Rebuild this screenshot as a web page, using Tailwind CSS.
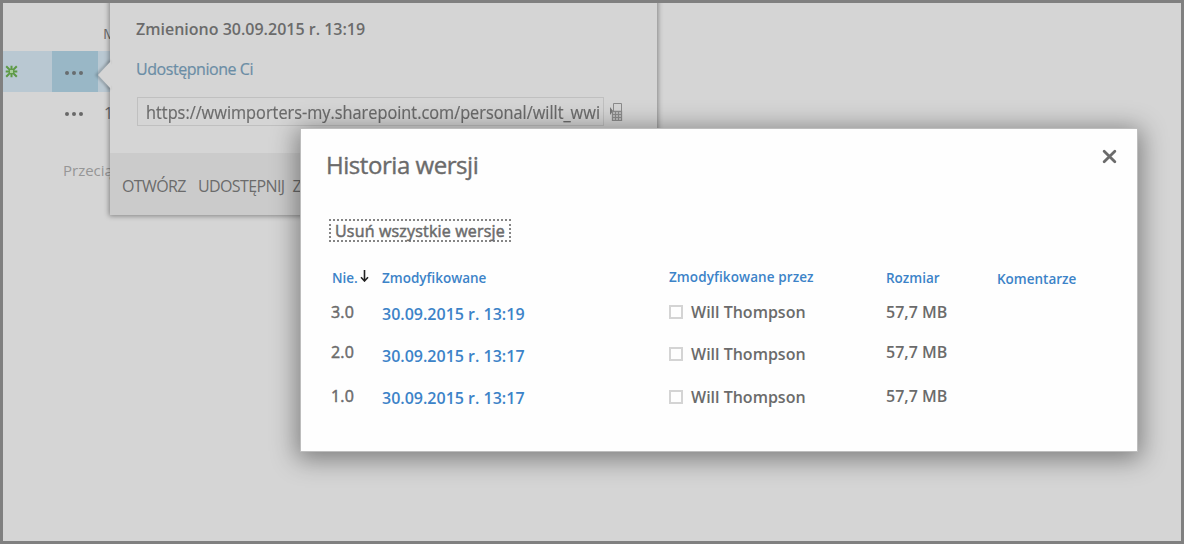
<!DOCTYPE html>
<html lang="pl">
<head>
<meta charset="utf-8">
<title>Historia wersji</title>
<script src="https://cdn.jsdelivr.net/npm/@tailwindcss/browser@4"></script>
</head>
<body class="font-['Open_Sans','Noto_Sans',sans-serif]">
<div class="relative flex h-[544px] w-[1184px] overflow-hidden border-3 border-[#808080] bg-[#d5d5d5] text-[#6b6b6b]">

  <!-- Document list behind the callout -->
  <main class="flex w-[130px] flex-col pt-5">
    <div class="h-7 pl-[100px] text-[15px] leading-5">Mo</div>
    <div class="flex h-[41px] items-center bg-[#b9c8d2]">
      <svg class="ml-[1.5px] h-[13px] w-[13px]" viewBox="0 0 13 13" fill="none" stroke="#5d9a45" stroke-width="2"><rect x="4.3" y="4.3" width="4.4" height="4.4" stroke-width="1.3" fill="#a9cf9b"/><path d="M6.5 0.7V4M6.5 9v3.3M0.7 6.5H4M9 6.5h3.3M1.2 1.2l3 3M11.8 1.2l-3 3M1.2 11.8l3-3M11.8 11.8l-3-3"/></svg>
      <div class="ml-[34px] flex h-full w-[46px] items-center gap-[3px] bg-[#99b7c6] pt-0.5 pl-[13px]">
        <i class="size-1 rounded-full bg-[#686d70]"></i><i class="size-1 rounded-full bg-[#686d70]"></i><i class="size-1 rounded-full bg-[#686d70]"></i>
      </div>
    </div>
    <div class="flex h-[41px] items-center pl-[62px]">
      <div class="flex gap-[3px] pt-0.5"><i class="size-1 rounded-full bg-[#686868]"></i><i class="size-1 rounded-full bg-[#686868]"></i><i class="size-1 rounded-full bg-[#686868]"></i></div>
      <span class="ml-[21px] text-base">1</span>
    </div>
    <div class="mt-[25px] pl-[60px] text-[15px] leading-6 whitespace-nowrap text-[#969696]">Przeciągnij</div>
  </main>

  <!-- File callout -->
  <section class="absolute -top-2 left-[107px] flex h-[220px] w-[547px] flex-col bg-[#d5d5d5] pt-2 shadow-[0_0_5px_1px_rgba(0,0,0,0.38)]">
    <svg class="absolute top-[66px] -left-[13px] h-[28px] w-[14px] overflow-visible" viewBox="0 0 14 28"><path d="M13 0L0 14L13 28" fill="none" stroke="#00000030" stroke-width="3" class="blur-[1px]"/><path d="M14 0L1 14L14 28Z" fill="#d5d5d5"/></svg>
    <h2 class="mt-[14px] ml-[26px] text-base leading-6 font-semibold whitespace-nowrap">Zmieniono 30.09.2015 r. 13:19</h2>
    <a class="mt-4 ml-[26px] text-base leading-6 tracking-[-0.45px] whitespace-nowrap text-[#6b8da5] [-webkit-text-stroke:0.2px]">Udostępnione Ci</a>
    <div class="mt-4 ml-[27px] flex items-center">
      <div class="flex h-[29px] w-[467px] items-center border border-[#c0c0c0] pt-px pl-2 text-[18px] whitespace-nowrap"><span class="w-[454px] origin-left scale-x-[0.906] [-webkit-text-stroke:0.2px]">https://wwimporters-my.sharepoint.com/personal/willt_wwi</span></div>
      <svg class="ml-[5px] h-[18px] w-[14px]" viewBox="0 0 14 18" fill="none" stroke="#8b8b8b"><path d="M1 4v8l3-4z" fill="#777" stroke="none"/><path d="M4.5 8V.5h8v8"/><path d="M3.5 8.5h9v9h-9zM6.5 8.5v9M9.5 8.5v9M3.5 11.5h9M3.5 14.5h9" stroke-width="1.3"/></svg>
    </div>
    <footer class="mt-auto flex h-[62px] items-center gap-[12px] bg-[#cbcbcb] pt-[3px] pl-[12px] text-base tracking-[-0.6px] whitespace-nowrap">
      <span>OTWÓRZ</span><span>UDOSTĘPNIJ</span><span class="-ml-[4px]">Z</span>
    </footer>
  </section>

  <!-- Version history dialog -->
  <section class="absolute top-[126px] left-[298px] flex h-[322px] w-[836px] flex-col bg-[#fefefe] pl-[25px] shadow-[0_0_0_1px_#bdbdbd,0_4px_24px_4px_rgba(0,0,0,0.42)]">
    <header class="flex justify-between pt-5 pr-5">
      <h1 class="text-2xl leading-8 tracking-[-0.45px] [-webkit-text-stroke:0.4px]">Historia wersji</h1>
      <svg class="h-[15px] w-[15px]" viewBox="0 0 14 14" stroke="#6b6b6b" stroke-width="2.6" stroke-linecap="round"><path d="M2 2l10 10M12 2L2 12"/></svg>
    </header>
    <div class="mt-[38px] ml-[3px] flex h-[23px] w-[182px] items-center border-2 border-dotted border-[#858585] pl-1 text-base tracking-[0.18px] whitespace-nowrap [-webkit-text-stroke:0.5px]">Usuń wszystkie wersje</div>
    <div class="mt-[26px] ml-[6px] flex text-base leading-5 font-semibold whitespace-nowrap">
      <div class="flex w-[50px] flex-col">
        <div class="flex h-5 gap-[2px] text-[13.5px] text-[#3c83c8]"><span>Nie.</span><svg class="mt-[2px] h-3 w-[9px]" viewBox="0 0 9 12" fill="none" stroke="#222" stroke-width="1.6"><path d="M4.5 0v10.5M1 7.3l3.5 3.7L8 7.3"/></svg></div>
        <div class="-ml-px flex flex-col font-normal tracking-[0.2px] [-webkit-text-stroke:0.5px]"><span class="mt-[14px]">3.0</span><span class="mt-5">2.0</span><span class="mt-6">1.0</span></div>
      </div>
      <div class="flex w-[287px] flex-col text-[#3c83c8]">
        <div class="text-[13.5px] leading-5">Zmodyfikowane</div>
        <div class="mt-4">30.09.2015 r. 13:19</div><div class="mt-[22px]">30.09.2015 r. 13:17</div><div class="mt-[22px]">30.09.2015 r. 13:17</div>
      </div>
      <div class="flex w-[217px] flex-col">
        <div class="-mt-px text-[13.5px] leading-5 tracking-[0.1px] text-[#3c83c8]">Zmodyfikowane przez</div>
        <div class="mt-[15px] flex items-center gap-2"><i class="size-[14px] border-2 border-[#d4d4d4]"></i>Will Thompson</div>
        <div class="mt-[22px] flex items-center gap-2"><i class="size-[14px] border-2 border-[#d4d4d4]"></i>Will Thompson</div>
        <div class="mt-[23px] flex items-center gap-2"><i class="size-[14px] border-2 border-[#d4d4d4]"></i>Will Thompson</div>
      </div>
      <div class="flex w-[111px] flex-col">
        <div class="text-[13.5px] leading-5 text-[#3c83c8]">Rozmiar</div>
        <div class="mt-[14px]">57,7 MB</div><div class="mt-5">57,7 MB</div><div class="mt-6">57,7 MB</div>
      </div>
      <div class="mt-px text-[13.5px] leading-5 text-[#3c83c8]">Komentarze</div>
    </div>
  </section>
</div>
</body>
</html>
